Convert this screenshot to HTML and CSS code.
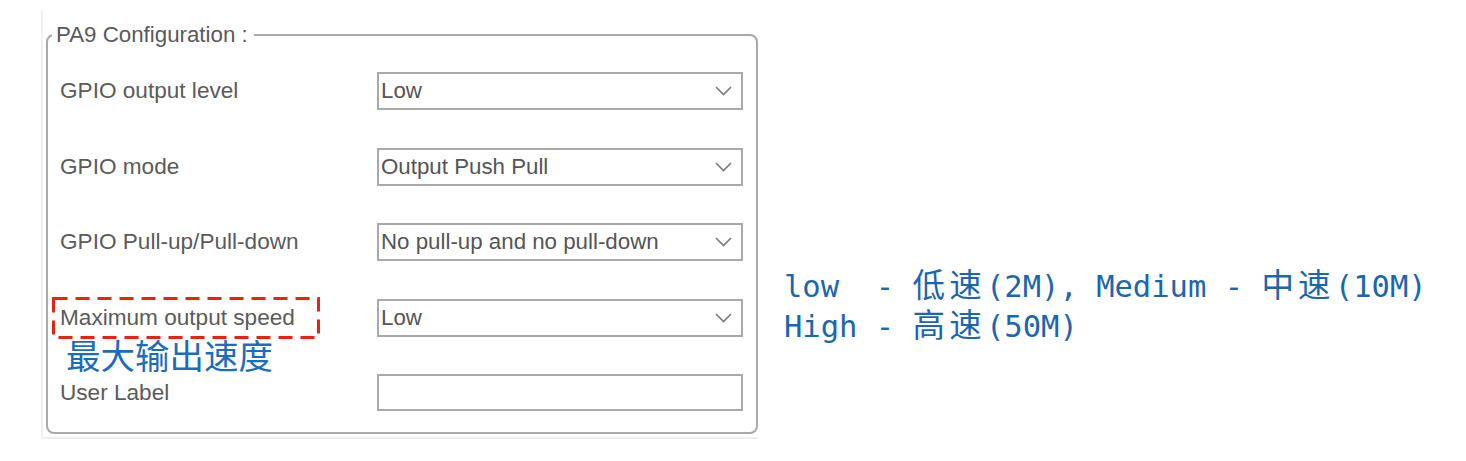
FILE: index.html
```html
<!DOCTYPE html>
<html lang="en">
<head>
    <meta charset="UTF-8">
    <meta name="viewport" content="width=device-width, initial-scale=1.0">
    <title>PA9 Configuration</title>
    <link rel="stylesheet" href="styles.css">
</head>
<body>
    <div class="panel">
        <fieldset class="config">
            <legend>PA9 Configuration :</legend>
            <div class="rows">
                <div class="label">GPIO output level</div>
                <div class="select">
                    <span>Low</span>
                    <svg class="chevron" width="17" height="10" viewBox="0 0 17 10"><polyline points="1,1 8.5,8.5 16,1" fill="none" stroke="#7a7a7a" stroke-width="1.6"/></svg>
                </div>

                <div class="label">GPIO mode</div>
                <div class="select">
                    <span>Output Push Pull</span>
                    <svg class="chevron" width="17" height="10" viewBox="0 0 17 10"><polyline points="1,1 8.5,8.5 16,1" fill="none" stroke="#7a7a7a" stroke-width="1.6"/></svg>
                </div>

                <div class="label">GPIO Pull-up/Pull-down</div>
                <div class="select">
                    <span>No pull-up and no pull-down</span>
                    <svg class="chevron" width="17" height="10" viewBox="0 0 17 10"><polyline points="1,1 8.5,8.5 16,1" fill="none" stroke="#7a7a7a" stroke-width="1.6"/></svg>
                </div>

                <div class="label marked">
                    Maximum output speed
                    <svg class="dash-box" width="268" height="42" viewBox="0 0 268 42"><rect x="1.5" y="1.5" width="265" height="39" fill="none" stroke="#e8240f" stroke-width="3" stroke-dasharray="14 8"/></svg>
                    <span class="note-cn">最大输出速度</span>
                </div>
                <div class="select">
                    <span>Low</span>
                    <svg class="chevron" width="17" height="10" viewBox="0 0 17 10"><polyline points="1,1 8.5,8.5 16,1" fill="none" stroke="#7a7a7a" stroke-width="1.6"/></svg>
                </div>

                <div class="label">User Label</div>
                <div class="input"></div>
            </div>
        </fieldset>
    </div>

    <div class="notes">
        <div class="line">low&nbsp;&nbsp;- <span class="cjk">低速</span>(2M), Medium - <span class="cjk">中速</span>(10M)</div>
        <div class="line">High - <span class="cjk">高速</span>(50M)</div>
    </div>
</body>
</html>
```

FILE: styles.css
```css
body {
    margin: 0;
    padding: 10px 0 0 41px;
    background-color: #fff;
    font-family: "Liberation Sans", Arial, sans-serif;
    display: flex;
    align-items: flex-start;
}
.panel {
    width: 712px;
    padding: 13px 0 3px 3px;
    border-left: 2px solid #f0f0f0;
    border-bottom: 2px solid #eeeeee;
}
.config {
    margin: 0;
    padding: 0 13px 20px 4px;
    border: 2px solid #a9a9a9;
    border-radius: 8px;
}
.config legend {
    padding: 0 6px 0 4px;
    font-size: 22.3px;
    line-height: 24px;
    color: #5a5a5a;
}
.rows {
    display: grid;
    grid-template-columns: 317px 366px;
    grid-auto-rows: 38px;
    row-gap: 37.6px;
    padding: 25px 0 0 8px;
}
.label {
    display: flex;
    align-items: center;
    font-size: 22.6px;
    color: #5b5b5b;
}
.marked {
    position: relative;
}
.dash-box {
    position: absolute;
    left: -8px;
    top: -2px;
}
.note-cn {
    position: absolute;
    left: 6px;
    top: 35px;
    font-family: "Noto Sans CJK SC", sans-serif;
    font-size: 34.5px;
    line-height: 40px;
    color: #1a6cbd;
    white-space: nowrap;
}
.select {
    display: flex;
    align-items: center;
    justify-content: space-between;
    border: 2px solid #a9a9a9;
    background-color: #fff;
    padding: 0 9px 0 2px;
    font-size: 22.3px;
    color: #555;
}
.chevron {
    display: block;
}
.input {
    height: 33px;
    border: 2px solid #a9a9a9;
    align-self: start;
}
.notes {
    margin: 257px 0 0 26px;
    font-family: "DejaVu Sans Mono", monospace;
    font-size: 30.5px;
    line-height: 40px;
    color: #1b66b1;
    white-space: nowrap;
}
.notes .line {
    height: 40px;
}
.notes .cjk {
    font-family: "Noto Sans CJK SC", sans-serif;
    font-size: 32.5px;
    letter-spacing: 4.2px;
    line-height: 1;
}
```
